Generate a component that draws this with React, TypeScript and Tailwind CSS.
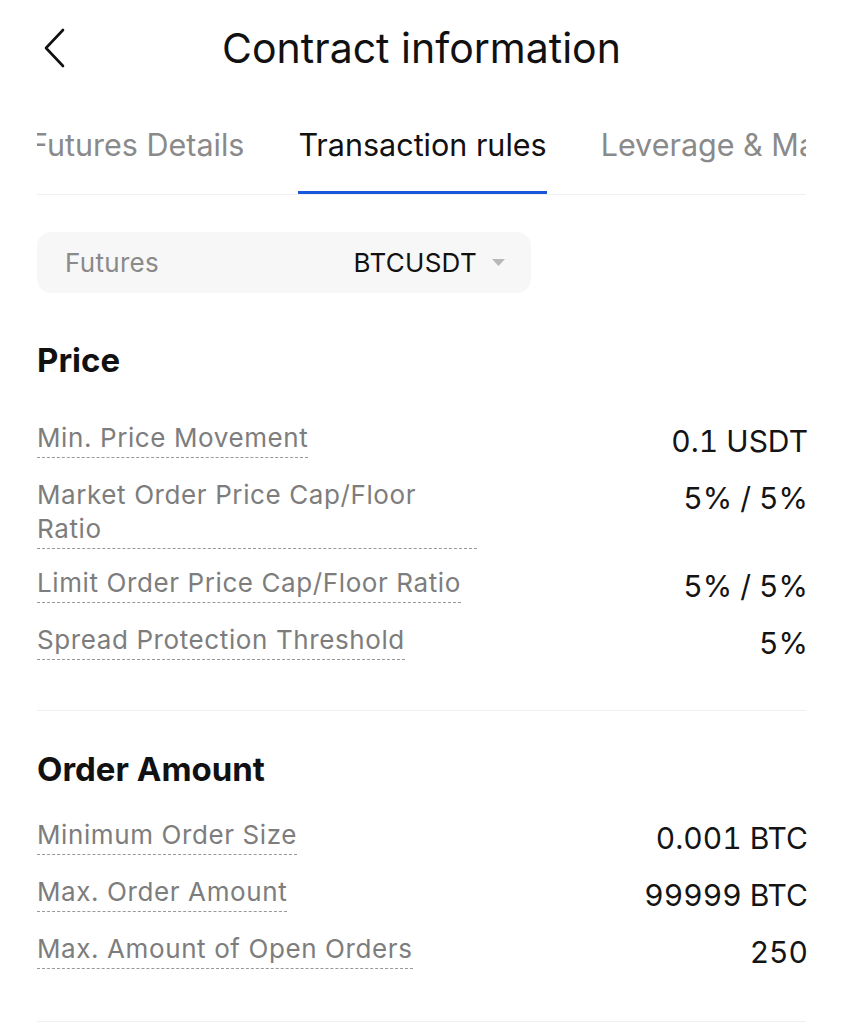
type Row = { label: string; value: string };

const priceRows: Row[] = [
  { label: "Min. Price Movement", value: "0.1 USDT" },
  { label: "Market Order Price Cap/Floor Ratio", value: "5% / 5%" },
  { label: "Limit Order Price Cap/Floor Ratio", value: "5% / 5%" },
  { label: "Spread Protection Threshold", value: "5%" },
];

const amountRows: Row[] = [
  { label: "Minimum Order Size", value: "0.001 BTC" },
  { label: "Max. Order Amount", value: "99999 BTC" },
  { label: "Max. Amount of Open Orders", value: "250" },
];

function RuleRow({ label, value }: Row) {
  return (
    <div className="flex items-start justify-between">
      <div className="max-w-[440px] border-b border-dashed border-[#999] pb-[2px] text-[26px] leading-[34px] tracking-[0.6px] text-[#7d7d7d]">
        {label}
      </div>
      <div className="-mr-[2px] text-[30px] leading-[40px] tabular-nums text-[#141414]">{value}</div>
    </div>
  );
}

function Section({ title, rows, top }: { title: string; rows: Row[]; top: string }) {
  return (
    <section>
      <h2 className="text-[33px] font-bold leading-[40px] text-[#111]">{title}</h2>
      <div className={`${top} flex flex-col gap-[17px]`}>
        {rows.map((r) => (
          <RuleRow key={r.label} {...r} />
        ))}
      </div>
    </section>
  );
}

export default function App() {
  return (
    <div className="min-h-screen bg-white font-['Inter',sans-serif] text-[#111]">
      {/* Header */}
      <header className="relative flex h-[96px] items-center justify-center">
        <svg className="absolute left-[44px] top-[28px]" width="22" height="40" viewBox="0 0 22 40">
          <polyline points="19,2 2,20 19,38" fill="none" stroke="#111" strokeWidth="2.6" strokeLinecap="round" strokeLinejoin="round" />
        </svg>
        <h1 className="text-[41px] leading-none text-[#111]">Contract information</h1>
      </header>

      <div className="px-[37px]">
        {/* Tabs */}
        <div className="overflow-hidden border-b border-[#f0f0f0]">
          <div className="ml-[-7px] flex gap-[54px] whitespace-nowrap pt-[28px] text-[30.5px] leading-[42px]">
            <div className="pb-[28px] text-[#8a8a8a]">Futures Details</div>
            <div className="relative pb-[28px] text-[#111]">
              Transaction rules
              <span className="absolute bottom-0 left-0 right-0 h-[3px] bg-[#1a56db]" />
            </div>
            <div className="pb-[28px] text-[#8a8a8a]">Leverage &amp; Margin</div>
          </div>
        </div>

        {/* Futures selector */}
        <div className="mt-[37px] flex h-[61px] w-[494px] items-center justify-between rounded-[14px] bg-[#f7f7f7] pl-[28px] pr-[26px] text-[26px] tracking-[0.3px]">
          <span className="text-[#8a8a8a]">Futures</span>
          <span className="flex items-center gap-[15px] text-[#111]">
            BTCUSDT
            <svg width="13" height="8" viewBox="0 0 13 8">
              <path d="M0 0h13L6.5 7z" fill="#b8b8b8" />
            </svg>
          </span>
        </div>

        <div className="mt-[47px] pb-[47px]">
          <Section title="Price" rows={priceRows} top="mt-[41px]" />
        </div>
        <div className="border-t border-[#f0f0f0] pt-[38px] pb-[49px]">
          <Section title="Order Amount" rows={amountRows} top="mt-[29px]" />
        </div>
        <div className="border-t border-[#f0f0f0]" />
      </div>
    </div>
  );
}
